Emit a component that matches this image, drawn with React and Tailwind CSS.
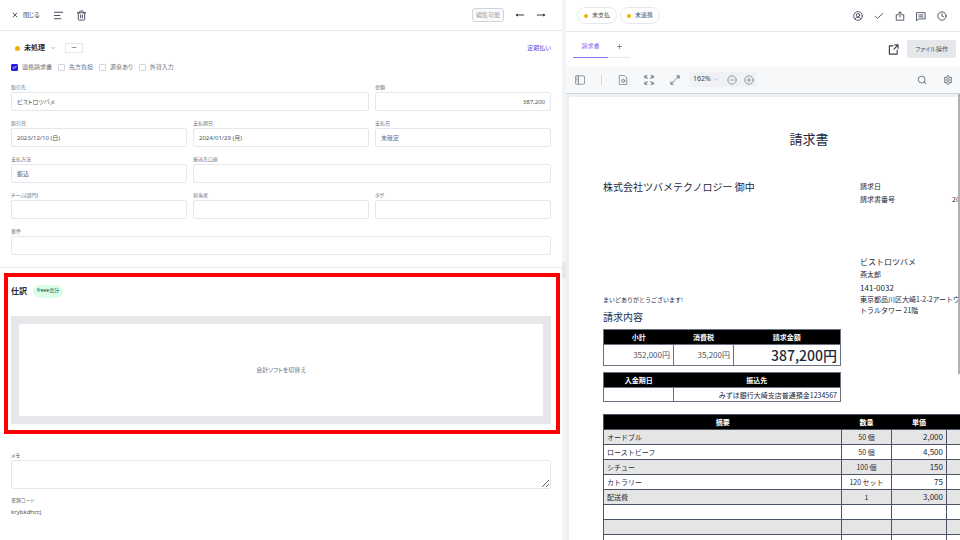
import { useState } from 'react';
import {
  AlignLeft,
  Check,
  ChevronDown,
  CircleMinus,
  CirclePlus,
  Clock,
  Search,
  Settings,
  Trash2,
  X,
} from 'lucide-react';

const TABLE_ROWS = [
  { name: 'オードブル', qty: '50 個', price: '2,000' },
  { name: 'ローストビーフ', qty: '50 個', price: '4,500' },
  { name: 'シチュー', qty: '100 個', price: '150' },
  { name: 'カトラリー', qty: '120 セット', price: '75' },
  { name: '配送費', qty: '1', price: '3,000' },
  { name: '', qty: '', price: '' },
  { name: '', qty: '', price: '' },
  { name: '', qty: '', price: '' },
];

const FLAGS = [
  { id: 'qualified', label: '適格請求書', checked: true },
  { id: 'feeBearer', label: '先方負担', checked: false },
  { id: 'withholding', label: '源泉あり', checked: false },
  { id: 'foreign', label: '外貨入力', checked: false },
];

// Small stroked icon on a 24px grid
const Icon = ({ className = 'size-[10px]', strokeWidth = 2, children }) => (
  <svg
    viewBox="0 0 24 24"
    fill="none"
    stroke="currentColor"
    strokeWidth={strokeWidth}
    strokeLinecap="round"
    strokeLinejoin="round"
    className={className}
  >
    {children}
  </svg>
);

const IconButton = ({ label, children }) => (
  <button type="button" aria-label={label} className="flex items-center justify-center">
    {children}
  </button>
);

const Field = ({ id, label, value = '', className = '', inputClass = 'text-gray-600' }) => {
  const [text, setText] = useState(value);

  return (
    <div className={`flex flex-col gap-px ${className}`}>
      <label htmlFor={id} className="text-[5px] leading-[8px] text-gray-500">
        {label}
      </label>
      <input
        id={id}
        type="text"
        value={text}
        onChange={(e) => setText(e.target.value)}
        className={`h-[19px] w-full rounded-[2px] border border-gray-200 bg-white px-[5px] text-[6px] outline-none ${inputClass}`}
      />
    </div>
  );
};

const FlagCheckbox = ({ id, label, checked }) => {
  const [on, setOn] = useState(checked);

  return (
    <div className="flex items-center gap-1">
      <span className="relative flex size-[7px]">
        <input
          id={id}
          type="checkbox"
          checked={on}
          onChange={(e) => setOn(e.target.checked)}
          className="size-[7px] appearance-none rounded-[1px] border border-gray-300 bg-white checked:border-[#2a1fdc] checked:bg-[#2a1fdc]"
        />
        {on && (
          <Check className="pointer-events-none absolute inset-px size-[5px] text-white" strokeWidth={4} />
        )}
      </span>
      <label htmlFor={id} className="text-[6px] text-gray-500">
        {label}
      </label>
    </div>
  );
};

const LeftHeader = () => (
  <header className="flex h-[31px] shrink-0 items-center justify-between border-b border-gray-200 pl-[11px] pr-4 text-gray-700">
    <div className="flex items-center">
      <button type="button" className="flex items-center gap-1 text-[6px]">
        <X className="size-2" strokeWidth={2.5} />
        閉じる
      </button>
      <div className="ml-[13px] flex items-center gap-3">
        <IconButton label="一覧">
          <AlignLeft className="size-[11px]" />
        </IconButton>
        <IconButton label="削除">
          <Trash2 className="size-[11px]" />
        </IconButton>
      </div>
    </div>
    <div className="flex items-center gap-[11px]">
      <span className="flex h-[14px] items-center rounded-[3px] border border-gray-300 bg-gray-50 px-[3px] text-[6px] text-gray-400">
        編集可能
      </span>
      <IconButton label="前へ">
        <Icon strokeWidth={2.5}>
          <path d="M3 12h18M6 10l-3 2 3 2" />
        </Icon>
      </IconButton>
      <IconButton label="次へ">
        <Icon strokeWidth={2.5}>
          <path d="M3 12h18M18 10l3 2-3 2" />
        </Icon>
      </IconButton>
    </div>
  </header>
);

const JournalSection = () => (
  <section className="relative border-t border-gray-200 px-[11px] py-4">
    <div className="pointer-events-none absolute bottom-[6px] left-[4px] right-[2px] top-[5px] border-4 border-[#ff0000]" />
    <div className="flex h-[14px] items-center gap-[6px]">
      <h2 className="text-[8px] font-bold text-gray-800">仕訳</h2>
      <span className="flex h-[13px] items-center rounded-full bg-green-100 px-1 text-[5px] text-green-900">
        freee会計
      </span>
    </div>
    <div className="mt-[18px] bg-gray-200 p-2">
      <button
        type="button"
        className="flex h-[92px] w-full items-center justify-center rounded-[1px] bg-white text-[6px] text-gray-500"
      >
        会計ソフトを切替え
      </button>
    </div>
  </section>
);

const EntryPanel = () => (
  <div className="flex min-w-0 flex-col overflow-hidden [font-feature-settings:'palt']">
    <LeftHeader />
    <div className="px-[11px] pb-3 pt-3">
      <div className="flex h-[10px] items-center justify-between pl-1">
        <div className="flex items-center">
          <span className="mr-1 size-[5px] rounded-full bg-yellow-500" />
          <select
            aria-label="ステータス"
            className="appearance-none bg-transparent text-[7px] font-bold text-gray-800 outline-none"
          >
            <option>未処理</option>
          </select>
          <ChevronDown className="ml-[5px] size-[6px] text-gray-500" />
          <button
            type="button"
            className="ml-[9px] flex h-[10px] w-[18px] items-center justify-center border border-gray-200 text-[6px] text-gray-700"
          >
            ー
          </button>
        </div>
        <a href="#recurring" className="text-[6px] text-[#5b50e0]">
          定期払い
        </a>
      </div>
      <div className="mt-[9px] flex h-[10px] items-center gap-[6px]">
        {FLAGS.map((flag) => (
          <FlagCheckbox key={flag.id} {...flag} />
        ))}
      </div>
      <form className="mt-[11px] grid grid-cols-3 gap-x-[6px] gap-y-2">
        <Field id="vendor" label="取引先" value="ビストロツバメ" className="col-span-2" />
        <Field id="amount" label="金額" value="387,200" inputClass="text-right text-gray-600" />
        <Field id="date" label="取引日" value="2023/12/10 (日)" />
        <Field id="due" label="支払期日" value="2024/01/29 (月)" />
        <Field id="paid" label="支払日" value="未確定" inputClass="text-gray-500" />
        <Field id="method" label="支払方法" value="振込" />
        <Field id="account" label="振込先口座" className="col-span-2" />
        <Field id="team" label="チーム(部門)" />
        <Field id="owner" label="担当者" />
        <Field id="tags" label="タグ" />
        <Field id="project" label="案件" className="col-span-3" />
      </form>
    </div>
    <JournalSection />
    <div className="flex flex-col px-[11px] pt-[11px]">
      <label htmlFor="memo" className="text-[5px] leading-[8px] text-gray-700">
        メモ
      </label>
      <textarea
        id="memo"
        className="mt-px h-[29px] w-full rounded-[2px] border border-gray-200 bg-white text-[6px] outline-none"
      />
      <p className="mt-[7px] text-[5px] leading-[8px] text-gray-500">書類コード</p>
      <p className="mt-[3px] text-[6px] leading-[10px] text-gray-600">krybkdhzzj</p>
    </div>
  </div>
);

const StatusPill = ({ children }) => (
  <button
    type="button"
    className="flex h-[17px] items-center gap-1 rounded-full border border-gray-200 px-[6px] text-[6px] text-gray-600"
  >
    <span className="size-1 rounded-full bg-yellow-500" />
    {children}
  </button>
);

const RightHeader = () => (
  <header className="flex h-8 shrink-0 items-center justify-between border-b border-gray-200 pl-[11px] pr-[13px] text-gray-700">
    <div className="flex items-center gap-[3px]">
      <StatusPill>未支払</StatusPill>
      <StatusPill>未連携</StatusPill>
    </div>
    <div className="flex items-center gap-[11px]">
      <IconButton label="担当者">
        <Icon>
          <circle cx="12" cy="12" r="10.5" />
          <circle cx="12" cy="10" r="4" />
          <path d="M5 19c1-3 4-4 7-4s6 1 7 4" />
        </Icon>
      </IconButton>
      <IconButton label="承認">
        <Icon>
          <path d="M3 13l5 5L21 6" />
        </Icon>
      </IconButton>
      <IconButton label="共有">
        <Icon>
          <path d="M8 9H3v13h18V9h-5M12 15V2M8 6l4-4 4 4" />
        </Icon>
      </IconButton>
      <IconButton label="コメント">
        <Icon>
          <path d="M2 4h20v15H7l-5 4zM7 9.500h10M7 14h10" />
        </Icon>
      </IconButton>
      <IconButton label="履歴">
        <Clock className="size-[10px]" />
      </IconButton>
    </div>
  </header>
);

const FileTabs = () => (
  <div className="flex h-[34px] shrink-0 items-end justify-between pb-2 pl-[7px] pr-1">
    <div className="flex">
      <button
        type="button"
        className="h-[22px] w-[35px] border-b border-[#7f77e6] text-[6px] text-[#7f77e6]"
      >
        請求書
      </button>
      <button
        type="button"
        aria-label="追加"
        className="flex h-[22px] w-[22px] items-center justify-center border-b border-gray-200 text-gray-600"
      >
        <Icon className="size-[5px]" strokeWidth={3}>
          <path d="M12 2v20M2 12h20" />
        </Icon>
      </button>
    </div>
    <div className="flex items-center gap-2">
      <IconButton label="別タブで開く">
        <Icon className="size-[11px] text-gray-700" strokeWidth={2.5}>
          <path d="M11 4H3v18h17v-9M15 2h7v7M22 2l-9 9" />
        </Icon>
      </IconButton>
      <button
        type="button"
        className="h-[18px] rounded-[2px] bg-gray-200 px-2 text-[6px] text-gray-600"
      >
        ファイル操作
      </button>
    </div>
  </div>
);

const ViewerToolbar = () => (
  <div className="flex h-7 shrink-0 items-center justify-between border-b border-gray-300 bg-[#f6f8fa] pl-[9px] pr-[7px] text-[#7c858e]">
    <div className="flex items-center gap-[9px]">
      <div className="flex items-center gap-4">
        <IconButton label="サイドバー">
          <Icon>
            <rect x="1" y="2" width="22" height="20" rx="2" />
            <path d="M8.500 2v20M4 7h1.500M4 11h1.500M4 15h1.500" />
          </Icon>
        </IconButton>
        <span className="h-[10px] w-px bg-gray-300" />
        <IconButton label="ページ表示">
          <Icon>
            <path d="M4 1h11l6 6v16H4z" />
            <circle cx="12.500" cy="14" r="4" />
            <path d="M12.500 13.500v1" />
          </Icon>
        </IconButton>
        <IconButton label="全体表示">
          <Icon strokeWidth={2.5}>
            <path d="M2 7V2h5M2 2l6 6M17 2h5v5M22 2l-6 6M2 17v5h5M2 22l6-6M22 17v5h-5M22 22l-6-6" />
          </Icon>
        </IconButton>
        <IconButton label="幅に合わせる">
          <Icon strokeWidth={2.5}>
            <path d="M16 2h6v6M22 2l-7 7M8 22H2v-6M2 22l7-7M11.500 12.500l1-1" />
          </Icon>
        </IconButton>
      </div>
      <div className="flex h-[15px] items-center rounded-[2px] bg-[#eff1f4] pl-1 pr-[2px]">
        <select
          aria-label="倍率"
          className="appearance-none bg-transparent text-[7px] text-gray-700 outline-none"
        >
          <option>162%</option>
        </select>
        <ChevronDown className="ml-[2px] size-[5px]" />
        <div className="ml-[9px] flex items-center gap-[7px]">
          <IconButton label="縮小">
            <CircleMinus className="size-[10px]" />
          </IconButton>
          <IconButton label="拡大">
            <CirclePlus className="size-[10px]" />
          </IconButton>
        </div>
      </div>
    </div>
    <div className="flex items-center gap-4">
      <IconButton label="検索">
        <Search className="size-[10px]" strokeWidth={2.5} />
      </IconButton>
      <IconButton label="設定">
        <Settings className="size-[10px]" strokeWidth={2.5} />
      </IconButton>
    </div>
  </div>
);

const InvoicePage = () => (
  <article className="min-h-full w-[480px] bg-white px-[34px] pt-[34px] font-['Noto_Sans_CJK_JP','Noto_Sans',sans-serif] text-[7px] text-gray-800">
    <h1 className="text-center text-[13px] leading-4">請求書</h1>
    <div className="mt-[33px] grid grid-cols-[257px_1fr]">
      <div>
        <p className="text-[10px] leading-[14px]">株式会社ツバメテクノロジー 御中</p>
        <p className="mt-[100px] text-[6px] leading-3">まいどありがとうございます!</p>
        <h2 className="mt-1 text-[10px] leading-[14px]">請求内容</h2>
      </div>
      <div className="whitespace-nowrap">
        <dl className="grid grid-cols-[92px_1fr] leading-[13px]">
          <dt>請求日</dt>
          <dd />
          <dt>請求書番号</dt>
          <dd>20</dd>
        </dl>
        <p className="mt-[50px] text-[8px] leading-3">ビストロツバメ</p>
        <p className="leading-[13px]">燕太郎</p>
        <p className="text-[8px] leading-[13px]">141-0032</p>
        <p className="leading-[11px]">東京都品川区大崎1-2-2アートヴ</p>
        <p className="leading-[11px]">トラルタワー 21階</p>
      </div>
    </div>

    <table className="mt-[5px] w-[238px] table-fixed border-collapse border border-gray-500">
      <colgroup>
        <col className="w-[70px]" />
        <col className="w-[60px]" />
        <col />
      </colgroup>
      <thead className="bg-black text-white">
        <tr className="h-[15px] leading-3">
          <th>小計</th>
          <th>消費税</th>
          <th>請求金額</th>
        </tr>
      </thead>
      <tbody>
        <tr className="h-[21px] text-right text-[8px] leading-4 text-gray-600">
          <td className="border border-gray-500 px-[3px]">352,000円</td>
          <td className="border border-gray-500 px-[3px]">35,200円</td>
          <td className="border border-gray-500 px-[3px] text-[14px] font-medium text-gray-800">
            387,200円
          </td>
        </tr>
      </tbody>
    </table>

    <table className="mt-[6px] w-[238px] table-fixed border-collapse border border-gray-500">
      <colgroup>
        <col className="w-[70px]" />
        <col />
      </colgroup>
      <thead className="bg-black text-white">
        <tr className="h-[15px] leading-3">
          <th>入金期日</th>
          <th>振込先</th>
        </tr>
      </thead>
      <tbody>
        <tr className="h-[14px] text-right leading-3">
          <td className="border border-gray-500 px-[3px]" />
          <td className="border border-gray-500 px-[3px]">みずほ銀行大崎支店普通預金1234567</td>
        </tr>
      </tbody>
    </table>

    <table className="mt-3 w-full table-fixed border-collapse border border-gray-600">
      <colgroup>
        <col className="w-[238px]" />
        <col className="w-[50px]" />
        <col className="w-[55px]" />
        <col />
      </colgroup>
      <thead className="bg-black text-white">
        <tr className="h-[15px] leading-3">
          <th>摘要</th>
          <th>数量</th>
          <th>単価</th>
          <th />
        </tr>
      </thead>
      <tbody>
        {TABLE_ROWS.map((row, i) => (
          <tr key={i} className="h-[15px] leading-3 odd:bg-[#e5e5e5]">
            <td className="border border-gray-600 px-[3px]">{row.name}</td>
            <td className="border border-gray-600 text-center">{row.qty}</td>
            <td className="border border-gray-600 px-[3px] text-right text-[8px]">{row.price}</td>
            <td className="border border-gray-600" />
          </tr>
        ))}
      </tbody>
    </table>
  </article>
);

const ViewerPanel = () => (
  <div className="flex min-h-0 min-w-0 flex-col overflow-hidden">
    <div className="[font-feature-settings:'palt']">
      <RightHeader />
      <FileTabs />
      <ViewerToolbar />
    </div>
    <div className="relative min-h-0 flex-1 overflow-hidden bg-[#eceff1] pl-[3px] pt-[3px]">
      <InvoicePage />
      <div className="absolute right-0 top-0 h-[280px] w-[2px] bg-[#aab1b9]" />
    </div>
  </div>
);

const App = () => (
  <div className="grid h-screen grid-cols-[minmax(0,562fr)_4px_minmax(0,394fr)] grid-rows-[minmax(0,1fr)] overflow-hidden bg-white font-['Noto_Sans','Noto_Sans_CJK_JP',sans-serif]">
    <EntryPanel />
    <div className="flex items-center bg-gray-100">
      <div className="h-4 w-full bg-gray-200" />
    </div>
    <ViewerPanel />
  </div>
);

export default App;
